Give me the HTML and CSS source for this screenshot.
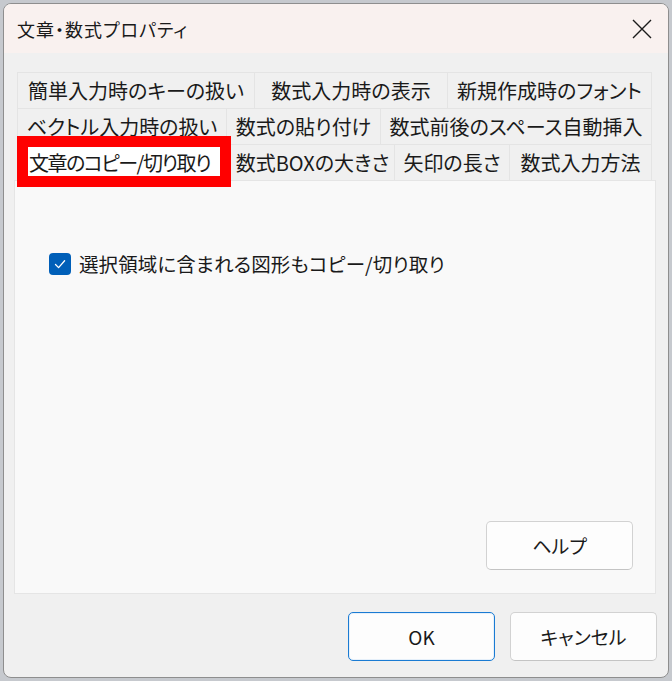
FILE: index.html
```html
<!DOCTYPE html>
<html lang="ja">
<head>
<meta charset="utf-8">
<title>文章・数式プロパティ</title>
<link rel="stylesheet" href="styles.css">
</head>
<body>
<div class="window">
  <div class="titlebar">
    <span class="title">文章・数式プロパティ</span>
    <svg class="close" width="20" height="20" viewBox="0 0 20 20"><path d="M1 1 L19 19 M19 1 L1 19" stroke="#1b1b1b" stroke-width="1.4" fill="none"/></svg>
  </div>
  <div class="content">
    <div class="tabs">
      <div class="tabrow row1">
        <div class="tab">簡単入力時のキーの扱い</div>
        <div class="tab">数式入力時の表示</div>
        <div class="tab last">新規作成時のフォント</div>
      </div>
      <div class="tabrow row2">
        <div class="tab">ベクトル入力時の扱い</div>
        <div class="tab">数式の貼り付け</div>
        <div class="tab last">数式前後のスペース自動挿入</div>
      </div>
      <div class="tabrow row3">
        <div class="tab selected">文章のコピー/切り取り</div>
        <div class="tab">数式BOXの大きさ</div>
        <div class="tab">矢印の長さ</div>
        <div class="tab last">数式入力方法</div>
      </div>
      <div class="highlight"></div>
    </div>
    <div class="panel">
      <label class="check">
        <span class="box"><svg width="22" height="22" viewBox="0 0 22 22"><path d="M6.5 11.5 L9.6 14.6 L15.6 7.8" stroke="#ffffff" stroke-width="1.3" fill="none" stroke-linecap="round" stroke-linejoin="round"/></svg></span>
        <span class="label">選択領域に含まれる図形もコピー/切り取り</span>
      </label>
      <div class="panel-spacer"></div>
      <div class="btn help">ヘルプ</div>
    </div>
    <div class="footer">
      <div class="btn primary">OK</div>
      <div class="btn">キャンセル</div>
    </div>
  </div>
</div>
</body>
</html>
```
FILE: styles.css
```css
html, body {
  margin: 0;
  padding: 0;
}
body {
  background: #c6c9ce;
  width: 672px;
  height: 681px;
  overflow: hidden;
  font-family: "Noto Sans CJK JP", "Noto Sans", sans-serif;
  color: #1a1a1a;
}
.window {
  box-sizing: border-box;
  margin: 3px 0 0 3px;
  width: 666px;
  height: 675px;
  border: 1px solid #8e8e8e;
  border-radius: 8px;
  overflow: hidden;
  background: #f0f0f0;
  display: flex;
  flex-direction: column;
}
.titlebar {
  height: 49px;
  flex: none;
  background: #f9f1ef;
  display: flex;
  align-items: center;
  justify-content: space-between;
  padding: 0 16px 0 13px;
}
.title {
  font-size: 18px;
  font-feature-settings: "palt";
  letter-spacing: 1px;
}
.close {
  display: block;
}
.content {
  padding: 19px 12px 16px 10px;
  display: flex;
  flex-direction: column;
  flex: 1;
}
.tabs {
  position: relative;
  margin: 0 2px 0 3px;
}
.tabrow {
  display: grid;
  height: 36px;
}
.row1 { grid-template-columns: 237px 193px 205px; }
.row2 { grid-template-columns: 209px 154px 272px; }
.row3 { grid-template-columns: 213px 164px 115px 143px; }
.tab {
  box-sizing: border-box;
  border-top: 1px solid #e4e4e4;
  border-left: 1px solid #e4e4e4;
  background: #f0f0f0;
  display: flex;
  align-items: center;
  justify-content: center;
  font-size: 20px;
  font-feature-settings: "palt";
  white-space: nowrap;
  line-height: 1;
  padding-top: 1px;
}
.tab.last {
  border-right: 1px solid #e4e4e4;
}
.tab.selected {
  background: #ffffff;
  justify-content: flex-start;
  padding-left: 11px;
  letter-spacing: -1.5px;
}
.highlight {
  position: absolute;
  left: 0;
  top: 64px;
  width: 214px;
  height: 51px;
  box-sizing: border-box;
  border: 11px solid #ff0000;
}
.panel {
  box-sizing: border-box;
  height: 414px;
  background: #f9f9f9;
  border: 1px solid #e5e5e5;
  display: flex;
  flex-direction: column;
  padding: 71px 22px 23px 34px;
}
.check {
  display: flex;
  align-items: center;
  gap: 8px;
}
.box {
  width: 22px;
  height: 22px;
  border-radius: 4px;
  background: #005fb8;
  display: block;
  flex: none;
}
.box svg {
  display: block;
}
.label {
  font-size: 19.5px;
  font-feature-settings: "palt";
  letter-spacing: 0.1px;
  line-height: 24px;
}
.panel-spacer {
  flex: 1;
}
.btn {
  box-sizing: border-box;
  width: 147px;
  height: 49px;
  background: #fdfdfd;
  border: 1px solid #d2d2d2;
  border-bottom-color: #c4c4c4;
  border-radius: 5px;
  display: flex;
  align-items: center;
  justify-content: center;
  font-size: 19px;
  font-feature-settings: "palt";
}
.help {
  align-self: flex-end;
}
.footer {
  margin-top: 18px;
  display: flex;
  justify-content: flex-end;
  gap: 15px;
  margin-right: -1px;
}
.primary {
  border: 1px solid #1a7bd3;
  box-shadow: inset 0 0 0 1px #e6f0fa;
}
```
